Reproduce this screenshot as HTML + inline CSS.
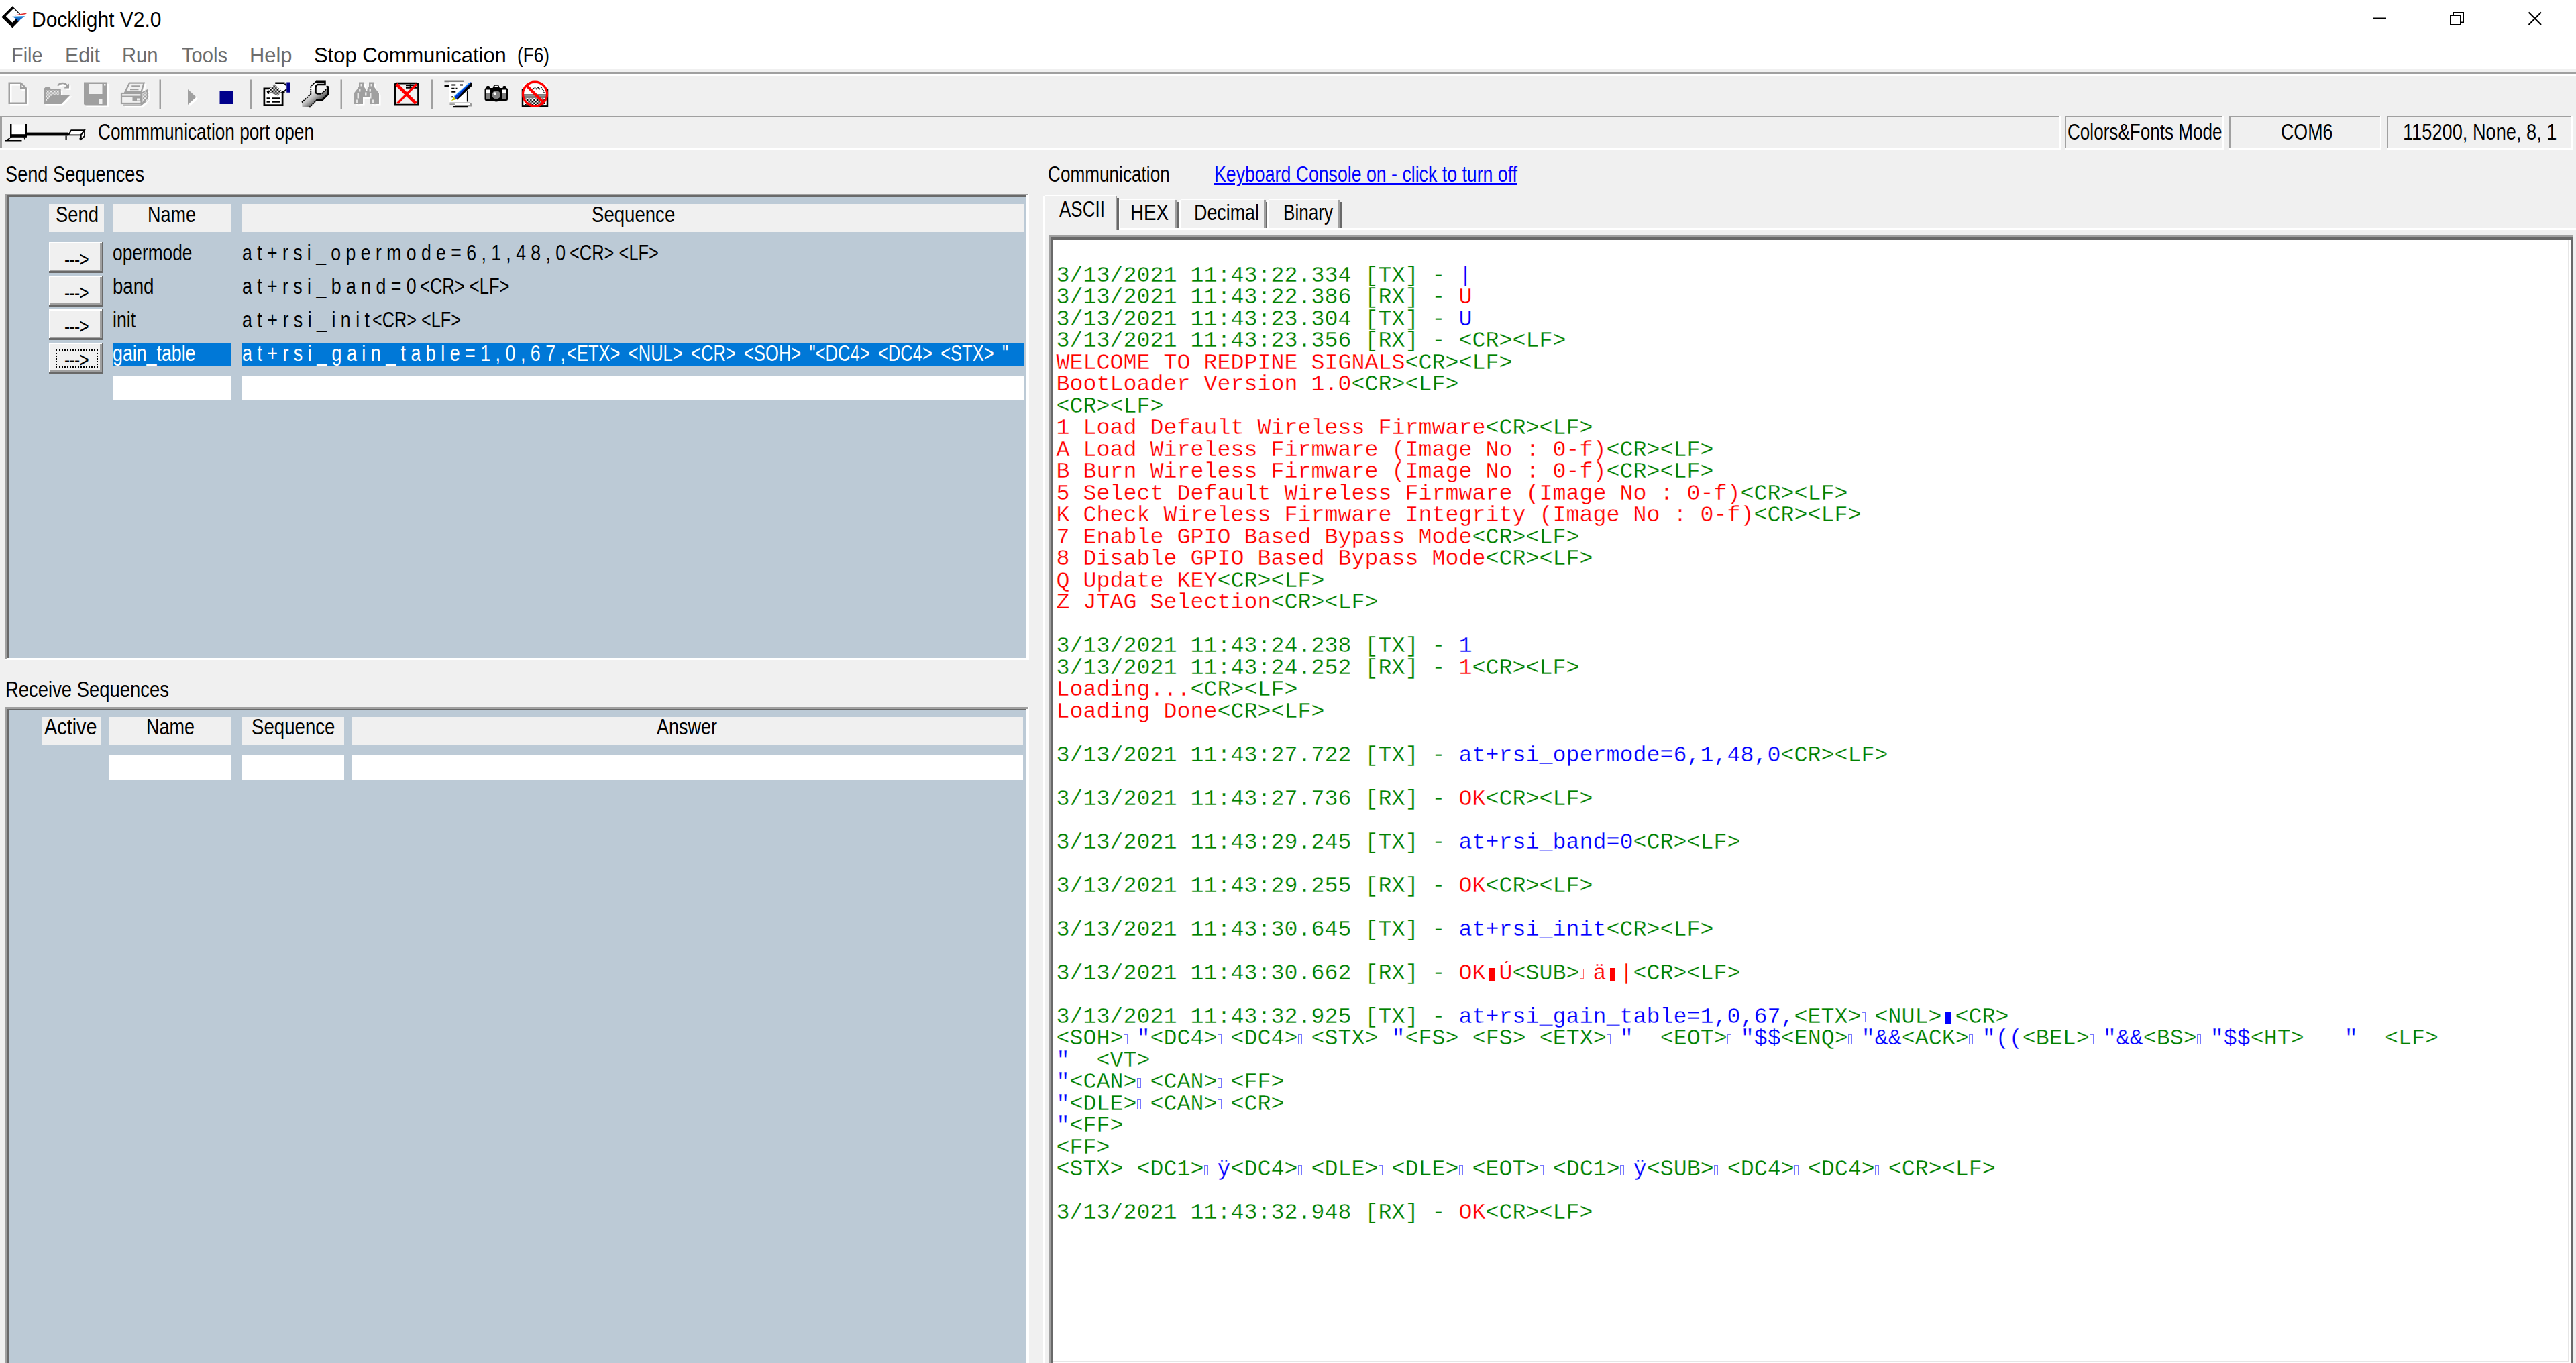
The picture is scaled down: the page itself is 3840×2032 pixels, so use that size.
<!DOCTYPE html>
<html lang="en"><head><meta charset="utf-8"><title>Docklight V2.0</title>
<style>
html,body{margin:0;padding:0;overflow:hidden;}
html{width:3840px;height:2032px;}
body{width:3840px;height:2032px;overflow:hidden;background:#f0f0f0;position:relative;font-family:"Liberation Sans",sans-serif;}
#r div{position:absolute;}
.t{position:absolute;white-space:pre;transform-origin:0 0;display:inline-block;}
svg{position:absolute;overflow:visible;}
#term{position:absolute;left:1574.5px;top:0;font:33.333px/32.5px "Liberation Mono",monospace;white-space:pre;}
#term div{position:absolute;left:0;height:32.5px;white-space:pre;-webkit-text-stroke:0.3px #fff;}
.g{color:#008000}.r{color:#ff0000}.b{color:#0000ff}
.bx{display:inline-block;width:20px;height:32.5px;vertical-align:top;position:relative;}
.bx i{position:absolute;left:0.5px;top:9.5px;width:3.5px;height:13px;border:1.75px solid currentColor;box-sizing:content-box;}
.bx.f i{background:currentColor;left:5px;top:8.6px;width:6px;height:16.5px;}
.pb{color:#7878ff}.pr{color:#ff7070}
</style></head><body>

<div id="r">
<div style="left:0px;top:0px;width:3840px;height:102.5px;background:#ffffff;"></div>
<div style="left:0px;top:108px;width:3840px;height:2.75px;background:#a0a0a0;"></div>
<div style="left:0px;top:110.75px;width:3840px;height:2.5px;background:#ffffff;"></div>
<div style="left:0px;top:172.5px;width:3072.5px;height:2.5px;background:#a0a0a0;"></div>
<div style="left:0px;top:172.5px;width:2.5px;height:50.0px;background:#a0a0a0;"></div>
<div style="left:0px;top:220.0px;width:3072.5px;height:2.5px;background:#ffffff;"></div>
<div style="left:3070.0px;top:172.5px;width:2.5px;height:50.0px;background:#ffffff;"></div>
<div style="left:3077.5px;top:172.5px;width:237.5px;height:2.5px;background:#a0a0a0;"></div>
<div style="left:3077.5px;top:172.5px;width:2.5px;height:50.0px;background:#a0a0a0;"></div>
<div style="left:3077.5px;top:220.0px;width:237.5px;height:2.5px;background:#ffffff;"></div>
<div style="left:3312.5px;top:172.5px;width:2.5px;height:50.0px;background:#ffffff;"></div>
<div style="left:3322.5px;top:172.5px;width:227.5px;height:2.5px;background:#a0a0a0;"></div>
<div style="left:3322.5px;top:172.5px;width:2.5px;height:50.0px;background:#a0a0a0;"></div>
<div style="left:3322.5px;top:220.0px;width:227.5px;height:2.5px;background:#ffffff;"></div>
<div style="left:3547.5px;top:172.5px;width:2.5px;height:50.0px;background:#ffffff;"></div>
<div style="left:3557.5px;top:172.5px;width:277.5px;height:2.5px;background:#a0a0a0;"></div>
<div style="left:3557.5px;top:172.5px;width:2.5px;height:50.0px;background:#a0a0a0;"></div>
<div style="left:3557.5px;top:220.0px;width:277.5px;height:2.5px;background:#ffffff;"></div>
<div style="left:3832.5px;top:172.5px;width:2.5px;height:50.0px;background:#ffffff;"></div>
<div style="left:7.5px;top:288.75px;width:1526.75px;height:695.25px;background:#ffffff;"></div>
<div style="left:7.5px;top:288.75px;width:1524.25px;height:2.5px;background:#a0a0a0;"></div>
<div style="left:7.5px;top:288.75px;width:2.5px;height:692.75px;background:#a0a0a0;"></div>
<div style="left:10.0px;top:291.25px;width:1519.75px;height:2.5px;background:#696969;"></div>
<div style="left:10.0px;top:291.25px;width:2.5px;height:689.25px;background:#696969;"></div>
<div style="left:12.5px;top:293.75px;width:1517.25px;height:686.75px;background:#bccad6;"></div>
<div style="left:7.5px;top:1054px;width:1526.75px;height:978px;background:#ffffff;"></div>
<div style="left:7.5px;top:1054px;width:1524.25px;height:2.5px;background:#a0a0a0;"></div>
<div style="left:7.5px;top:1054px;width:2.5px;height:978px;background:#a0a0a0;"></div>
<div style="left:10.0px;top:1056.5px;width:1519.75px;height:2.5px;background:#696969;"></div>
<div style="left:10.0px;top:1056.5px;width:2.5px;height:975.5px;background:#696969;"></div>
<div style="left:12.5px;top:1059px;width:1517.25px;height:973px;background:#bccad6;"></div>
<div style="left:72.5px;top:304px;width:82.5px;height:41.5px;background:#f0f0f0;"></div>
<div style="left:167.5px;top:304px;width:177.5px;height:41.5px;background:#f0f0f0;"></div>
<div style="left:360px;top:304px;width:1167px;height:41.5px;background:#f0f0f0;"></div>
<div style="left:62.5px;top:1068.5px;width:87.5px;height:42px;background:#f0f0f0;"></div>
<div style="left:162.5px;top:1068.5px;width:182.5px;height:42px;background:#f0f0f0;"></div>
<div style="left:360px;top:1068.5px;width:152.5px;height:42px;background:#f0f0f0;"></div>
<div style="left:525px;top:1068.5px;width:1000px;height:42px;background:#f0f0f0;"></div>
<div style="left:162.5px;top:1126px;width:182.5px;height:36.5px;background:#ffffff;"></div>
<div style="left:360px;top:1126px;width:152.5px;height:36.5px;background:#ffffff;"></div>
<div style="left:525px;top:1126px;width:1000px;height:36.5px;background:#ffffff;"></div>
<div style="left:167.5px;top:510.5px;width:177.5px;height:34.5px;background:#0078d7;"></div>
<div style="left:360px;top:510.5px;width:1167px;height:34.5px;background:#0078d7;"></div>
<div style="left:167.5px;top:560.5px;width:177.5px;height:35px;background:#ffffff;"></div>
<div style="left:360px;top:560.5px;width:1167px;height:35px;background:#ffffff;"></div>
<div style="left:72.5px;top:360.5px;width:81.5px;height:46.0px;background:#696969;"></div>
<div style="left:72.5px;top:360.5px;width:79.0px;height:43.5px;background:#ffffff;"></div>
<div style="left:75.0px;top:363.0px;width:76.5px;height:41.0px;background:#a0a0a0;"></div>
<div style="left:75.0px;top:363.0px;width:74.0px;height:38.5px;background:#f0f0f0;"></div>
<div style="left:72.5px;top:410.5px;width:81.5px;height:46.0px;background:#696969;"></div>
<div style="left:72.5px;top:410.5px;width:79.0px;height:43.5px;background:#ffffff;"></div>
<div style="left:75.0px;top:413.0px;width:76.5px;height:41.0px;background:#a0a0a0;"></div>
<div style="left:75.0px;top:413.0px;width:74.0px;height:38.5px;background:#f0f0f0;"></div>
<div style="left:72.5px;top:460.5px;width:81.5px;height:46.0px;background:#696969;"></div>
<div style="left:72.5px;top:460.5px;width:79.0px;height:43.5px;background:#ffffff;"></div>
<div style="left:75.0px;top:463.0px;width:76.5px;height:41.0px;background:#a0a0a0;"></div>
<div style="left:75.0px;top:463.0px;width:74.0px;height:38.5px;background:#f0f0f0;"></div>
<div style="left:72.5px;top:510.5px;width:81.5px;height:46.0px;background:#696969;"></div>
<div style="left:72.5px;top:510.5px;width:79.0px;height:43.5px;background:#ffffff;"></div>
<div style="left:75.0px;top:513.0px;width:76.5px;height:41.0px;background:#a0a0a0;"></div>
<div style="left:75.0px;top:513.0px;width:74.0px;height:38.5px;background:#f0f0f0;"></div>
<div style="left:82.5px;top:520.5px;width:63px;height:27.5px;background:transparent;border:2.5px dotted #000;box-sizing:border-box;"></div>
<div style="left:1555px;top:340px;width:2285px;height:2.5px;background:#ffffff;"></div>
<div style="left:1555px;top:340px;width:2.5px;height:1692px;background:#ffffff;"></div>
<div style="left:1666px;top:295.5px;width:91px;height:44.5px;background:#f0f0f0;"></div>
<div style="left:1666px;top:298.0px;width:2.5px;height:42.0px;background:#ffffff;"></div>
<div style="left:1668.5px;top:295.5px;width:83.5px;height:2.5px;background:#ffffff;"></div>
<div style="left:1752px;top:298.0px;width:2.5px;height:42.0px;background:#a0a0a0;"></div>
<div style="left:1754.5px;top:300.5px;width:2.5px;height:39.5px;background:#696969;"></div>
<div style="left:1757px;top:295.5px;width:132px;height:44.5px;background:#f0f0f0;"></div>
<div style="left:1757px;top:298.0px;width:2.5px;height:42.0px;background:#ffffff;"></div>
<div style="left:1759.5px;top:295.5px;width:124.5px;height:2.5px;background:#ffffff;"></div>
<div style="left:1884px;top:298.0px;width:2.5px;height:42.0px;background:#a0a0a0;"></div>
<div style="left:1886.5px;top:300.5px;width:2.5px;height:39.5px;background:#696969;"></div>
<div style="left:1889px;top:295.5px;width:111px;height:44.5px;background:#f0f0f0;"></div>
<div style="left:1889px;top:298.0px;width:2.5px;height:42.0px;background:#ffffff;"></div>
<div style="left:1891.5px;top:295.5px;width:103.5px;height:2.5px;background:#ffffff;"></div>
<div style="left:1995px;top:298.0px;width:2.5px;height:42.0px;background:#a0a0a0;"></div>
<div style="left:1997.5px;top:300.5px;width:2.5px;height:39.5px;background:#696969;"></div>
<div style="left:1555px;top:289.5px;width:112.5px;height:53.0px;background:#f0f0f0;"></div>
<div style="left:1555px;top:292.0px;width:2.5px;height:50.5px;background:#ffffff;"></div>
<div style="left:1557.5px;top:289.5px;width:105.0px;height:2.5px;background:#ffffff;"></div>
<div style="left:1662.5px;top:292.0px;width:2.5px;height:50.5px;background:#a0a0a0;"></div>
<div style="left:1665.0px;top:294.5px;width:2.5px;height:48.0px;background:#696969;"></div>
<div style="left:1562.5px;top:351px;width:2272.5px;height:1681px;background:#696969;"></div>
<div style="left:1562.5px;top:351px;width:2272.5px;height:2.5px;background:#a0a0a0;"></div>
<div style="left:1562.5px;top:351px;width:3px;height:1681px;background:#a0a0a0;"></div>
<div style="left:1570px;top:357.5px;width:2262px;height:1674.5px;background:#ffffff;"></div>
<div style="left:3827.5px;top:357.5px;width:2.25px;height:1673.5px;background:#e6e6e6;"></div>
<div style="left:1570px;top:2028.5px;width:2259.75px;height:2.25px;background:#e6e6e6;"></div>
</div>
<svg style="left:0;top:0" width="3840" height="230" viewBox="0 0 3840 230"><defs><pattern id="ck" width="2" height="2" patternUnits="userSpaceOnUse"><rect width="2" height="2" fill="#fff"/><rect width="1" height="1" fill="#000"/><rect x="1" y="1" width="1" height="1" fill="#000"/></pattern><pattern id="cg" width="2" height="2" patternUnits="userSpaceOnUse"><rect width="2" height="2" fill="#f0f0f0"/><rect width="1" height="1" fill="#a0a0a0"/><rect x="1" y="1" width="1" height="1" fill="#a0a0a0"/></pattern></defs><g transform="translate(15.0,125.0) scale(2.5)" color="#fff"><path d="M0.5,0.5 H7.5 L10.5,3.5 V12.5 H0.5 Z M7.5,0.5 V3.5 H10.5" fill="none" stroke="currentColor" stroke-width="1"/></g><g transform="translate(12.5,122.5) scale(2.5)" color="#a0a0a0"><path d="M0.5,0.5 H7.5 L10.5,3.5 V12.5 H0.5 Z M7.5,0.5 V3.5 H10.5" fill="none" stroke="currentColor" stroke-width="1"/></g>
<g transform="translate(67.5,125.0) scale(2.5)" color="#fff"><path d="M0,13 V4 L1,3 H3.5 L4.5,4 H10.3 V7.4 H16 L10.6,13 Z" fill="currentColor"/><path d="M1.2,4.8 H9.3 V7.4 H5.5 L1.2,11.8 Z" fill="url(#cg)"/><path d="M8.3,2 Q10,0.2 12.3,0.7 Q13.8,1.2 14.4,3" fill="none" stroke="currentColor" stroke-width="1"/><path d="M12,3.6 H15.2 V0.8 Z" fill="currentColor"/></g><g transform="translate(65,122.5) scale(2.5)" color="#a0a0a0"><path d="M0,13 V4 L1,3 H3.5 L4.5,4 H10.3 V7.4 H16 L10.6,13 Z" fill="currentColor"/><path d="M1.2,4.8 H9.3 V7.4 H5.5 L1.2,11.8 Z" fill="url(#cg)"/><path d="M8.3,2 Q10,0.2 12.3,0.7 Q13.8,1.2 14.4,3" fill="none" stroke="currentColor" stroke-width="1"/><path d="M12,3.6 H15.2 V0.8 Z" fill="currentColor"/></g>
<g transform="translate(127.5,125.0) scale(2.5)" color="#fff"><path d="M0,0 H14 V14 H1 L0,13 Z" fill="currentColor"/><rect x="3" y="1" width="8" height="6" fill="#f0f0f0"/><rect x="12" y="1" width="1" height="1" fill="#f0f0f0"/><rect x="9" y="10" width="2" height="3" fill="#f0f0f0"/></g><g transform="translate(125,122.5) scale(2.5)" color="#a0a0a0"><path d="M0,0 H14 V14 H1 L0,13 Z" fill="currentColor"/><rect x="3" y="1" width="8" height="6" fill="#f0f0f0"/><rect x="12" y="1" width="1" height="1" fill="#f0f0f0"/><rect x="9" y="10" width="2" height="3" fill="#f0f0f0"/></g>
<g transform="translate(182.5,125.0) scale(2.5)" color="#fff"><path d="M5.2,0.4 H13.8 L12.2,5.8 H2.6 Z" fill="#f0f0f0" stroke="currentColor" stroke-width="0.9"/><path d="M6.5,2.3 H11.5 M5.6,4.3 H10.6" stroke="currentColor" stroke-width="0.8"/><path d="M12.2,6.5 L15.8,4.6 V9.6 L12.2,13 Z" fill="url(#cg)" stroke="currentColor" stroke-width="0.6"/><rect x="0.4" y="6.6" width="11.8" height="6" fill="#f0f0f0" stroke="currentColor" stroke-width="0.9"/><rect x="0.4" y="8" width="11.8" height="1" fill="currentColor"/><rect x="7" y="9" width="5" height="2.2" fill="currentColor"/><rect x="9.6" y="9.6" width="1.6" height="1.2" fill="#f0f0f0"/><path d="M1.6,13.6 H12 L14.6,11.4" fill="none" stroke="currentColor" stroke-width="0.9"/></g><g transform="translate(180,122.5) scale(2.5)" color="#a0a0a0"><path d="M5.2,0.4 H13.8 L12.2,5.8 H2.6 Z" fill="#f0f0f0" stroke="currentColor" stroke-width="0.9"/><path d="M6.5,2.3 H11.5 M5.6,4.3 H10.6" stroke="currentColor" stroke-width="0.8"/><path d="M12.2,6.5 L15.8,4.6 V9.6 L12.2,13 Z" fill="url(#cg)" stroke="currentColor" stroke-width="0.6"/><rect x="0.4" y="6.6" width="11.8" height="6" fill="#f0f0f0" stroke="currentColor" stroke-width="0.9"/><rect x="0.4" y="8" width="11.8" height="1" fill="currentColor"/><rect x="7" y="9" width="5" height="2.2" fill="currentColor"/><rect x="9.6" y="9.6" width="1.6" height="1.2" fill="#f0f0f0"/><path d="M1.6,13.6 H12 L14.6,11.4" fill="none" stroke="currentColor" stroke-width="0.9"/></g>
<rect x="237.5" y="118.5" width="2.5" height="44.5" fill="#a0a0a0"/>
<g transform="translate(282.5,135.5) scale(2.5)" color="#fff"><path d="M0,0 L5,4.6 L0,9.2 Z" fill="currentColor"/></g><g transform="translate(280,133) scale(2.5)" color="#a0a0a0"><path d="M0,0 L5,4.6 L0,9.2 Z" fill="currentColor"/></g>
<rect x="327.5" y="135" width="20" height="20" fill="#00008b"/>
<rect x="372.5" y="118.5" width="2.5" height="44.5" fill="#a0a0a0"/>
<g transform="translate(392.5,122.5) scale(2.5)"><rect x="0.55" y="3.75" width="10.9" height="9.9" fill="#fff" stroke="#000" stroke-width="1.1"/><path d="M2,9.55 H3.8 M5.1,9.55 H9.8 M2,11.6 H3.8 M5.1,11.6 H9.8" stroke="#000" stroke-width="0.9"/><path d="M6.7,1.1 L7.3,0.5 H12.8 L13.9,1.7 V4.5 L12.8,5.65 H10.6 L8.5,8 L2.4,5.4 Z" fill="#fdfdfd"/><path d="M7.1,0.5 H12.8 M10.4,5.65 H12.8" stroke="#000" stroke-width="1"/><path d="M6.7,1.1 L11.3,5.5 L8.5,8 L2.4,5.4 Z" fill="url(#ck)"/><path d="M2,5.4 L3.5,5.4 L3.5,6.9 L2.6,6.9 Z" fill="#000"/><path d="M12.8,1 L13.9,2 M12.8,5.2 L13.9,4.2" stroke="#000" stroke-width="0.9"/><rect x="13.9" y="0" width="2" height="6.1" fill="#00008b"/></g>
<g transform="translate(450,120) scale(2.5)"><defs><linearGradient id="wg" x1="0.2" y1="0.1" x2="0.75" y2="0.8"><stop offset="0.3" stop-color="#fff"/><stop offset="0.62" stop-color="#b8b8b8"/><stop offset="1" stop-color="#303030"/></linearGradient></defs><path d="M8.4,0.6 L13.8,0.6 L13.8,2.4 L9.2,2.4 L8.2,3.6 L8.2,7.2 L9.2,7.8 L11.8,7.8 L14.6,5 L14.6,3.4 L15.7,3.9 L15.7,8 L12.3,11.4 L9,11.4 L4.5,16 L0.2,15.6 L0,13 L5.3,8 L5.3,3.4 Z" fill="url(#wg)"/><path d="M8.4,0.6 L5.3,3.4 V8 L0,13" fill="none" stroke="#000" stroke-width="0.8" stroke-dasharray="0.9 0.5"/><path d="M8.4,0.65 H13.8 V2.4 H9.2 L8.2,3.6 V7.2 L9.2,7.8 H11.6" fill="none" stroke="#000" stroke-width="1"/><path d="M14.6,3.4 L15.7,3.9 V8 L12.3,11.4 H9" fill="none" stroke="#000" stroke-width="1.1"/><path d="M11.8,7.8 L14.6,5" fill="none" stroke="#000" stroke-width="0.8" stroke-dasharray="0.9 0.5"/><path d="M9,11.4 L4.5,16" fill="none" stroke="#000" stroke-width="0.8" stroke-dasharray="0.9 0.5"/></g>
<rect x="507.5" y="118.5" width="2.5" height="44.5" fill="#a0a0a0"/>
<g transform="translate(530.0,125.0) scale(2.5)" color="#fff"><path d="M3,0 H6 V2.6 L7,4 V5 H8 V4 L9,2.6 V0 H12 V2.6 L13,4 L15,6.6 V13 H9.6 V9 H5.4 V13 H0 V6.6 L2,4 L3,2.6 Z" fill="currentColor"/><rect x="4" y="1" width="1" height="1.4" fill="#e6e6e6"/><rect x="10" y="1" width="1" height="1.4" fill="#e6e6e6"/><rect x="3" y="4" width="1" height="1.6" fill="#e6e6e6"/><rect x="9.2" y="4" width="1" height="1.6" fill="#e6e6e6"/><rect x="2" y="6.6" width="1" height="3" fill="#e6e6e6"/><rect x="6.6" y="6" width="1" height="2" fill="#e6e6e6"/><rect x="9.4" y="6.6" width="1" height="3" fill="#e6e6e6"/><rect x="1.2" y="10.4" width="1" height="1.8" fill="#e6e6e6"/><rect x="11" y="10.4" width="1" height="1.8" fill="#e6e6e6"/></g><g transform="translate(527.5,122.5) scale(2.5)" color="#a0a0a0"><path d="M3,0 H6 V2.6 L7,4 V5 H8 V4 L9,2.6 V0 H12 V2.6 L13,4 L15,6.6 V13 H9.6 V9 H5.4 V13 H0 V6.6 L2,4 L3,2.6 Z" fill="currentColor"/><rect x="4" y="1" width="1" height="1.4" fill="#e6e6e6"/><rect x="10" y="1" width="1" height="1.4" fill="#e6e6e6"/><rect x="3" y="4" width="1" height="1.6" fill="#e6e6e6"/><rect x="9.2" y="4" width="1" height="1.6" fill="#e6e6e6"/><rect x="2" y="6.6" width="1" height="3" fill="#e6e6e6"/><rect x="6.6" y="6" width="1" height="2" fill="#e6e6e6"/><rect x="9.4" y="6.6" width="1" height="3" fill="#e6e6e6"/><rect x="1.2" y="10.4" width="1" height="1.8" fill="#e6e6e6"/><rect x="11" y="10.4" width="1" height="1.8" fill="#e6e6e6"/></g>
<g transform="translate(587.5,122.5) scale(2.5)"><path d="M1.6,0.6 H13.4 Q14.4,0.6 14.4,1.6 V13.4 H0.6 V1.6 Q0.6,0.6 1.6,0.6 Z" fill="none" stroke="#000" stroke-width="1.1"/><path d="M7,3.3 H14 M9.6,1.2 V3.3 M7,1.9 H12.4" fill="none" stroke="#000" stroke-width="0.7"/><path d="M1.4,1.2 L13,12.6" stroke="#f00" stroke-width="1.9"/><path d="M13.4,1.2 L2,12.6" stroke="#f00" stroke-width="1.3"/></g>
<rect x="642.5" y="118.5" width="2.5" height="44.5" fill="#a0a0a0"/>
<g transform="translate(662.5,120) scale(2.5)"><rect x="0" y="0.2" width="11.6" height="0.7" fill="#808080"/><rect x="0" y="2.6" width="2.6" height="1.1" fill="#000"/><path d="M3,0.9 H11.6 L13.8,3 V13 H3 Z" fill="#fff"/><path d="M4.3,2.6 H6.7 M9,2.6 H11 M4.3,4.7 H6 M6.8,4.7 H7.6 M4.3,6.7 H6.7 M4.3,9.7 H5" stroke="#000" stroke-width="0.8"/><path d="M13.7,6 V12.6" stroke="#000" stroke-width="0.7"/><path d="M15.8,0.8 L16.2,2.6 L7,11 L5.6,9.8 Z" fill="#0038c8"/><path d="M16.2,1 V3.4 L7.6,11.4 L7,11 Z" fill="#000"/><path d="M14.8,1.6 L6,9.4" stroke="#2090ff" stroke-width="0.6"/><path d="M5.6,9.8 L7.2,11.2 L4.2,12 Z" fill="#c8c800"/><path d="M3.2,13.4 H15 L15.8,14 V15 H6.4" fill="none" stroke="#9a9a9a" stroke-width="0.8"/><rect x="6" y="13.6" width="9" height="1.2" fill="#fff"/><rect x="5.2" y="15.2" width="9" height="0.9" fill="#000"/><rect x="3.2" y="13.8" width="3" height="1" fill="#9a9a9a"/></g>
<g transform="translate(722.5,126) scale(2.5)"><path d="M1,2 V1.4 Q1,0.8 1.6,0.8 H2.4 Q3,0.8 3,1.4 V2 H4.8 L5.4,0.6 Q5.6,0 6.2,0 H7.6 Q8.2,0 8.4,0.6 L9,2 H10.8 V1.4 Q10.8,0.8 11.4,0.8 H12.2 Q12.8,0.8 12.8,1.4 V2 Q13.8,2 13.8,3 V8.6 Q13.8,9.6 12.8,9.6 H8.4 Q6.9,10.8 5.4,9.6 H1 Q0,9.6 0,8.6 V3 Q0,2 1,2 Z" fill="#000"/><rect x="6" y="0.7" width="1.8" height="0.8" fill="#fff"/><rect x="1" y="3" width="2.2" height="2.2" fill="#fff"/><rect x="1" y="5.2" width="2.2" height="3.4" fill="#808080"/><rect x="10.6" y="3" width="2.2" height="2.2" fill="#fff"/><rect x="10.6" y="5.2" width="2.2" height="3.4" fill="#808080"/><circle cx="6.9" cy="6.1" r="2.5" fill="#808080"/><circle cx="6.1" cy="5.3" r="0.8" fill="#fff"/></g>
<g transform="translate(777.5,120) scale(2.5)"><path d="M0.6,5 V15.4 H15.4 V5" fill="#fff" stroke="#000" stroke-width="1"/><rect x="1" y="2" width="14" height="4" fill="#fff"/><path d="M6.8,5 L7.8,4.2 L8.8,5 L9.8,4.2 L10.8,5 L11.8,4.2 L13.4,6.4 L13.4,7.6" fill="none" stroke="#000" stroke-width="0.7" stroke-dasharray="0.7 0.5"/><rect x="1.2" y="8.2" width="13.6" height="0.7" fill="#000"/><rect x="1.2" y="8.9" width="13.6" height="1.5" fill="#808080"/><rect x="1.8" y="10.6" width="12.4" height="4" fill="url(#ck)"/><rect x="0.6" y="15" width="14.8" height="1" fill="#000"/><circle cx="8" cy="8" r="7.2" fill="none" stroke="#f00" stroke-width="1.3"/><path d="M2.9,2.9 L13.1,13.1" stroke="#f00" stroke-width="1.7"/></g>
<g><defs><linearGradient id="tb" x1="0" y1="0" x2="0" y2="1"><stop offset="0" stop-color="#3aa0e8"/><stop offset="0.45" stop-color="#1464c0"/><stop offset="1" stop-color="#0a4ea8"/></linearGradient></defs><path d="M2.2,25.5 L18.6,9.3 L30.5,21.2 L29.6,22 L20.3,12.7 L8.8,24.2 L18.4,33.8 L25.5,26.7 L29.5,30.6 L18.6,41.5 Z" fill="#000"/><path d="M21.1,22.6 L41,19.2 L38,21.6 L23,23.3 Z" fill="#e03030"/><path d="M18,24.8 L37.3,23.9 L26.7,32.3 L25,28.8 Z" fill="url(#tb)"/></g>
<g stroke="#000" stroke-width="2" fill="none"><path d="M3537,27.5 H3557"/><path d="M3653,23 H3668 V37 H3653 Z"/><path d="M3657,23 V19 H3672 V33.5 H3668"/><path d="M3769.5,18.5 L3788,37 M3788,18.5 L3769.5,37"/></g>
<g><rect x="17" y="185.5" width="21" height="15" fill="#fff"/><rect x="15" y="185" width="2.5" height="20" fill="#000"/><rect x="37.5" y="185" width="2.5" height="19" fill="#000"/><rect x="15" y="200.2" width="25" height="4.6" fill="#000"/><rect x="40" y="197.6" width="62" height="4.8" fill="#000"/><rect x="7.5" y="208.2" width="25" height="2.3" fill="#000"/><path d="M14.5,205 L9.5,208.6 H13 L15.5,206 Z" fill="#000"/><path d="M35,204.5 H38.5 L36.6,208 Z" fill="#000"/><rect x="97.5" y="202.4" width="2.2" height="5.6" fill="#000"/><path d="M106.2,194.2 H126 L120.4,201.4 H102 Z" fill="#fff" stroke="#000" stroke-width="1.8"/><path d="M126,194.2 V203 L120.8,207.6 V201.4 Z" fill="#fff" stroke="#000" stroke-width="1.8"/><path d="M118.5,206.8 H121" stroke="#000" stroke-width="1.8"/></g></svg>
<span id="t0" class="t" style="left:46.50px;top:14.48px;font:30.5px/1 'Liberation Sans',sans-serif;color:#000;transform:scaleX(0.9839);">Docklight V2.0</span>
<span id="t1" class="t" style="left:16.50px;top:67.25px;font:31px/1 'Liberation Sans',sans-serif;color:#6d6d6d;transform:scaleX(0.9309);">File</span>
<span id="t2" class="t" style="left:96.50px;top:67.25px;font:31px/1 'Liberation Sans',sans-serif;color:#6d6d6d;transform:scaleX(0.9734);">Edit</span>
<span id="t3" class="t" style="left:181.50px;top:67.25px;font:31px/1 'Liberation Sans',sans-serif;color:#6d6d6d;transform:scaleX(0.9407);">Run</span>
<span id="t4" class="t" style="left:270.50px;top:67.25px;font:31px/1 'Liberation Sans',sans-serif;color:#6d6d6d;transform:scaleX(0.9396);">Tools</span>
<span id="t5" class="t" style="left:371.50px;top:67.25px;font:31px/1 'Liberation Sans',sans-serif;color:#6d6d6d;transform:scaleX(0.9958);">Help</span>
<span id="t6" class="t" style="left:468.20px;top:67.25px;font:31px/1 'Liberation Sans',sans-serif;color:#000;transform:scaleX(0.9967);">Stop Communication</span>
<span id="t7" class="t" style="left:771.00px;top:67.25px;font:31px/1 'Liberation Sans',sans-serif;color:#000;transform:scaleX(0.8447);">(F6)</span>
<span id="t8" class="t" style="left:145.50px;top:181.48px;font:32.5px/1 'Liberation Sans',sans-serif;color:#000;transform:scaleX(0.8065);">Commmunication port open</span>
<span id="t9" class="t" style="left:3081.50px;top:181.48px;font:32.5px/1 'Liberation Sans',sans-serif;color:#000;transform:scaleX(0.8026);">Colors&amp;Fonts Mode</span>
<span id="t10" class="t" style="left:3399.50px;top:181.48px;font:32.5px/1 'Liberation Sans',sans-serif;color:#000;transform:scaleX(0.8253);">COM6</span>
<span id="t11" class="t" style="left:3582.00px;top:181.48px;font:32.5px/1 'Liberation Sans',sans-serif;color:#000;transform:scaleX(0.8374);">115200, None, 8, 1</span>
<span id="t12" class="t" style="left:7.50px;top:243.98px;font:32.5px/1 'Liberation Sans',sans-serif;color:#000;transform:scaleX(0.8362);">Send Sequences</span>
<span id="t13" class="t" style="left:7.50px;top:1012.48px;font:32.5px/1 'Liberation Sans',sans-serif;color:#000;transform:scaleX(0.8441);">Receive Sequences</span>
<span id="t14" class="t" style="left:1562.25px;top:243.98px;font:32.5px/1 'Liberation Sans',sans-serif;color:#000;transform:scaleX(0.8049);">Communication</span>
<span id="t15" class="t" style="left:1809.50px;top:243.98px;font:32.5px/1 'Liberation Sans',sans-serif;color:#0000ff;transform:scaleX(0.8212);text-decoration:underline;text-decoration-thickness:2.5px;text-underline-offset:1.5px;">Keyboard Console on - click to turn off</span>
<span id="t16" class="t" style="left:1578.50px;top:296.48px;font:32.5px/1 'Liberation Sans',sans-serif;color:#000;transform:scaleX(0.8010);">ASCII</span>
<span id="t17" class="t" style="left:1684.50px;top:301.48px;font:32.5px/1 'Liberation Sans',sans-serif;color:#000;transform:scaleX(0.8529);">HEX</span>
<span id="t18" class="t" style="left:1779.50px;top:301.48px;font:32.5px/1 'Liberation Sans',sans-serif;color:#000;transform:scaleX(0.8263);">Decimal</span>
<span id="t19" class="t" style="left:1912.50px;top:301.48px;font:32.5px/1 'Liberation Sans',sans-serif;color:#000;transform:scaleX(0.8033);">Binary</span>
<span id="t20" class="t" style="left:82.50px;top:303.98px;font:32.5px/1 'Liberation Sans',sans-serif;color:#000;transform:scaleX(0.8431);">Send</span>
<span id="t21" class="t" style="left:219.50px;top:303.98px;font:32.5px/1 'Liberation Sans',sans-serif;color:#000;transform:scaleX(0.8304);">Name</span>
<span id="t22" class="t" style="left:882.25px;top:303.98px;font:32.5px/1 'Liberation Sans',sans-serif;color:#000;transform:scaleX(0.8488);">Sequence</span>
<span id="t23" class="t" style="left:66.00px;top:1068.48px;font:32.5px/1 'Liberation Sans',sans-serif;color:#000;transform:scaleX(0.8868);">Active</span>
<span id="t24" class="t" style="left:217.50px;top:1068.48px;font:32.5px/1 'Liberation Sans',sans-serif;color:#000;transform:scaleX(0.8304);">Name</span>
<span id="t25" class="t" style="left:374.50px;top:1068.48px;font:32.5px/1 'Liberation Sans',sans-serif;color:#000;transform:scaleX(0.8505);">Sequence</span>
<span id="t26" class="t" style="left:978.50px;top:1068.48px;font:32.5px/1 'Liberation Sans',sans-serif;color:#000;transform:scaleX(0.8304);">Answer</span>
<span id="t27" class="t" style="left:168.00px;top:360.98px;font:32.5px/1 'Liberation Sans',sans-serif;color:#000;transform:scaleX(0.8097);">opermode</span>
<span id="t28" class="t" style="left:168.00px;top:410.98px;font:32.5px/1 'Liberation Sans',sans-serif;color:#000;transform:scaleX(0.8505);">band</span>
<span id="t29" class="t" style="left:168.00px;top:460.98px;font:32.5px/1 'Liberation Sans',sans-serif;color:#000;transform:scaleX(0.8208);">init</span>
<span id="t30" class="t" style="left:168.00px;top:510.98px;font:32.5px/1 'Liberation Sans',sans-serif;color:#fff;transform:scaleX(0.8233);">gain_table</span>
<span id="t31" class="t" style="left:360.50px;top:360.98px;font:32.5px/1 'Liberation Sans',sans-serif;color:#000;transform:scaleX(0.8196);letter-spacing:9px;">at+rsi_opermode=6,1,48,0</span>
<span id="t32" class="t" style="left:848.50px;top:360.98px;font:32.5px/1 'Liberation Sans',sans-serif;color:#000;transform:scaleX(0.7831);">&lt;CR&gt; &lt;LF&gt;</span>
<span id="t33" class="t" style="left:360.50px;top:410.98px;font:32.5px/1 'Liberation Sans',sans-serif;color:#000;transform:scaleX(0.8220);letter-spacing:9px;">at+rsi_band=0</span>
<span id="t34" class="t" style="left:625.50px;top:410.98px;font:32.5px/1 'Liberation Sans',sans-serif;color:#000;transform:scaleX(0.7861);">&lt;CR&gt; &lt;LF&gt;</span>
<span id="t35" class="t" style="left:360.50px;top:460.98px;font:32.5px/1 'Liberation Sans',sans-serif;color:#000;transform:scaleX(0.8264);letter-spacing:9px;">at+rsi_init</span>
<span id="t36" class="t" style="left:554.50px;top:460.98px;font:32.5px/1 'Liberation Sans',sans-serif;color:#000;transform:scaleX(0.7773);">&lt;CR&gt; &lt;LF&gt;</span>
<span id="t37" class="t" style="left:360.50px;top:510.98px;font:32.5px/1 'Liberation Sans',sans-serif;color:#fff;transform:scaleX(0.8271);letter-spacing:9px;">at+rsi_gain_table=1,0,67,</span>
<span id="t38" class="t" style="left:844.50px;top:510.98px;font:32.5px/1 'Liberation Sans',sans-serif;color:#fff;transform:scaleX(0.7855);word-spacing:6.7px;">&lt;ETX&gt; &lt;NUL&gt; &lt;CR&gt; &lt;SOH&gt; &quot;&lt;DC4&gt; &lt;DC4&gt; &lt;STX&gt; &quot;</span>
<span id="t39" class="t" style="left:96.00px;top:370.41px;font:32px/1 'Liberation Sans',sans-serif;color:#000;transform:scaleX(0.7716);letter-spacing:-1px;">---&gt;</span>
<span id="t40" class="t" style="left:96.00px;top:420.41px;font:32px/1 'Liberation Sans',sans-serif;color:#000;transform:scaleX(0.7716);letter-spacing:-1px;">---&gt;</span>
<span id="t41" class="t" style="left:96.00px;top:470.41px;font:32px/1 'Liberation Sans',sans-serif;color:#000;transform:scaleX(0.7716);letter-spacing:-1px;">---&gt;</span>
<span id="t42" class="t" style="left:96.00px;top:520.41px;font:32px/1 'Liberation Sans',sans-serif;color:#000;transform:scaleX(0.7716);letter-spacing:-1px;">---&gt;</span>
<div id="term">
<div style="top:394.88px"><span class="g">3/13/2021 11:43:22.334 [TX] - </span><span class="b">|</span></div>
<div style="top:427.38px"><span class="g">3/13/2021 11:43:22.386 [RX] - </span><span class="r">U</span></div>
<div style="top:459.88px"><span class="g">3/13/2021 11:43:23.304 [TX] - </span><span class="b">U</span></div>
<div style="top:492.38px"><span class="g">3/13/2021 11:43:23.356 [RX] - </span><span class="g">&lt;CR&gt;&lt;LF&gt;</span></div>
<div style="top:524.88px"><span class="r">WELCOME TO REDPINE SIGNALS</span><span class="g">&lt;CR&gt;&lt;LF&gt;</span></div>
<div style="top:557.38px"><span class="r">BootLoader Version 1.0</span><span class="g">&lt;CR&gt;&lt;LF&gt;</span></div>
<div style="top:589.88px"><span class="g">&lt;CR&gt;&lt;LF&gt;</span></div>
<div style="top:622.38px"><span class="r">1 Load Default Wireless Firmware</span><span class="g">&lt;CR&gt;&lt;LF&gt;</span></div>
<div style="top:654.88px"><span class="r">A Load Wireless Firmware (Image No : 0-f)</span><span class="g">&lt;CR&gt;&lt;LF&gt;</span></div>
<div style="top:687.38px"><span class="r">B Burn Wireless Firmware (Image No : 0-f)</span><span class="g">&lt;CR&gt;&lt;LF&gt;</span></div>
<div style="top:719.88px"><span class="r">5 Select Default Wireless Firmware (Image No : 0-f)</span><span class="g">&lt;CR&gt;&lt;LF&gt;</span></div>
<div style="top:752.38px"><span class="r">K Check Wireless Firmware Integrity (Image No : 0-f)</span><span class="g">&lt;CR&gt;&lt;LF&gt;</span></div>
<div style="top:784.88px"><span class="r">7 Enable GPIO Based Bypass Mode</span><span class="g">&lt;CR&gt;&lt;LF&gt;</span></div>
<div style="top:817.38px"><span class="r">8 Disable GPIO Based Bypass Mode</span><span class="g">&lt;CR&gt;&lt;LF&gt;</span></div>
<div style="top:849.88px"><span class="r">Q Update KEY</span><span class="g">&lt;CR&gt;&lt;LF&gt;</span></div>
<div style="top:882.38px"><span class="r">Z JTAG Selection</span><span class="g">&lt;CR&gt;&lt;LF&gt;</span></div>
<div style="top:947.38px"><span class="g">3/13/2021 11:43:24.238 [TX] - </span><span class="b">1</span></div>
<div style="top:979.88px"><span class="g">3/13/2021 11:43:24.252 [RX] - </span><span class="r">1</span><span class="g">&lt;CR&gt;&lt;LF&gt;</span></div>
<div style="top:1012.38px"><span class="r">Loading...</span><span class="g">&lt;CR&gt;&lt;LF&gt;</span></div>
<div style="top:1044.88px"><span class="r">Loading Done</span><span class="g">&lt;CR&gt;&lt;LF&gt;</span></div>
<div style="top:1109.88px"><span class="g">3/13/2021 11:43:27.722 [TX] - </span><span class="b">at+rsi_opermode=6,1,48,0</span><span class="g">&lt;CR&gt;&lt;LF&gt;</span></div>
<div style="top:1174.88px"><span class="g">3/13/2021 11:43:27.736 [RX] - </span><span class="r">OK</span><span class="g">&lt;CR&gt;&lt;LF&gt;</span></div>
<div style="top:1239.88px"><span class="g">3/13/2021 11:43:29.245 [TX] - </span><span class="b">at+rsi_band=0</span><span class="g">&lt;CR&gt;&lt;LF&gt;</span></div>
<div style="top:1304.88px"><span class="g">3/13/2021 11:43:29.255 [RX] - </span><span class="r">OK</span><span class="g">&lt;CR&gt;&lt;LF&gt;</span></div>
<div style="top:1369.88px"><span class="g">3/13/2021 11:43:30.645 [TX] - </span><span class="b">at+rsi_init</span><span class="g">&lt;CR&gt;&lt;LF&gt;</span></div>
<div style="top:1434.88px"><span class="g">3/13/2021 11:43:30.662 [RX] - </span><span class="r">OK<span class="bx f r"><i></i></span>Ú</span><span class="g">&lt;SUB&gt;</span><span class="r"><span class="bx pr"><i></i></span>ä<span class="bx f r"><i></i></span>|</span><span class="g">&lt;CR&gt;&lt;LF&gt;</span></div>
<div style="top:1499.88px"><span class="g">3/13/2021 11:43:32.925 [TX] - </span><span class="b">at+rsi_gain_table=1,0,67,</span><span class="g">&lt;ETX&gt;</span><span class="b"><span class="bx pb"><i></i></span></span><span class="g">&lt;NUL&gt;</span><span class="b"><span class="bx f b"><i></i></span></span><span class="g">&lt;CR&gt;</span></div>
<div style="top:1532.38px"><span class="g">&lt;SOH&gt;</span><span class="b"><span class="bx pb"><i></i></span>&quot;</span><span class="g">&lt;DC4&gt;</span><span class="b"><span class="bx pb"><i></i></span></span><span class="g">&lt;DC4&gt;</span><span class="b"><span class="bx pb"><i></i></span></span><span class="g">&lt;STX&gt;</span><span class="b"> &quot;</span><span class="g">&lt;FS&gt;</span><span class="b"> </span><span class="g">&lt;FS&gt;</span><span class="b"> </span><span class="g">&lt;ETX&gt;</span><span class="b"><span class="bx pb"><i></i></span>&quot;  </span><span class="g">&lt;EOT&gt;</span><span class="b"><span class="bx pb"><i></i></span>&quot;$$</span><span class="g">&lt;ENQ&gt;</span><span class="b"><span class="bx pb"><i></i></span>&quot;&amp;&amp;</span><span class="g">&lt;ACK&gt;</span><span class="b"><span class="bx pb"><i></i></span>&quot;((</span><span class="g">&lt;BEL&gt;</span><span class="b"><span class="bx pb"><i></i></span>&quot;&amp;&amp;</span><span class="g">&lt;BS&gt;</span><span class="b"><span class="bx pb"><i></i></span>&quot;$$</span><span class="g">&lt;HT&gt;</span><span class="b">   &quot;  </span><span class="g">&lt;LF&gt;</span></div>
<div style="top:1564.88px"><span class="b">&quot;  </span><span class="g">&lt;VT&gt;</span></div>
<div style="top:1597.38px"><span class="b">&quot;</span><span class="g">&lt;CAN&gt;</span><span class="b"><span class="bx pb"><i></i></span></span><span class="g">&lt;CAN&gt;</span><span class="b"><span class="bx pb"><i></i></span></span><span class="g">&lt;FF&gt;</span></div>
<div style="top:1629.88px"><span class="b">&quot;</span><span class="g">&lt;DLE&gt;</span><span class="b"><span class="bx pb"><i></i></span></span><span class="g">&lt;CAN&gt;</span><span class="b"><span class="bx pb"><i></i></span></span><span class="g">&lt;CR&gt;</span></div>
<div style="top:1662.38px"><span class="b">&quot;</span><span class="g">&lt;FF&gt;</span></div>
<div style="top:1694.88px"><span class="g">&lt;FF&gt;</span></div>
<div style="top:1727.38px"><span class="g">&lt;STX&gt;</span><span class="b"> </span><span class="g">&lt;DC1&gt;</span><span class="b"><span class="bx pb"><i></i></span>ÿ</span><span class="g">&lt;DC4&gt;</span><span class="b"><span class="bx pb"><i></i></span></span><span class="g">&lt;DLE&gt;</span><span class="b"><span class="bx pb"><i></i></span></span><span class="g">&lt;DLE&gt;</span><span class="b"><span class="bx pb"><i></i></span></span><span class="g">&lt;EOT&gt;</span><span class="b"><span class="bx pb"><i></i></span></span><span class="g">&lt;DC1&gt;</span><span class="b"><span class="bx pb"><i></i></span>ÿ</span><span class="g">&lt;SUB&gt;</span><span class="b"><span class="bx pb"><i></i></span></span><span class="g">&lt;DC4&gt;</span><span class="b"><span class="bx pb"><i></i></span></span><span class="g">&lt;DC4&gt;</span><span class="b"><span class="bx pb"><i></i></span></span><span class="g">&lt;CR&gt;</span><span class="g">&lt;LF&gt;</span></div>
<div style="top:1792.38px"><span class="g">3/13/2021 11:43:32.948 [RX] - </span><span class="r">OK</span><span class="g">&lt;CR&gt;&lt;LF&gt;</span></div>
</div>
</body></html>
